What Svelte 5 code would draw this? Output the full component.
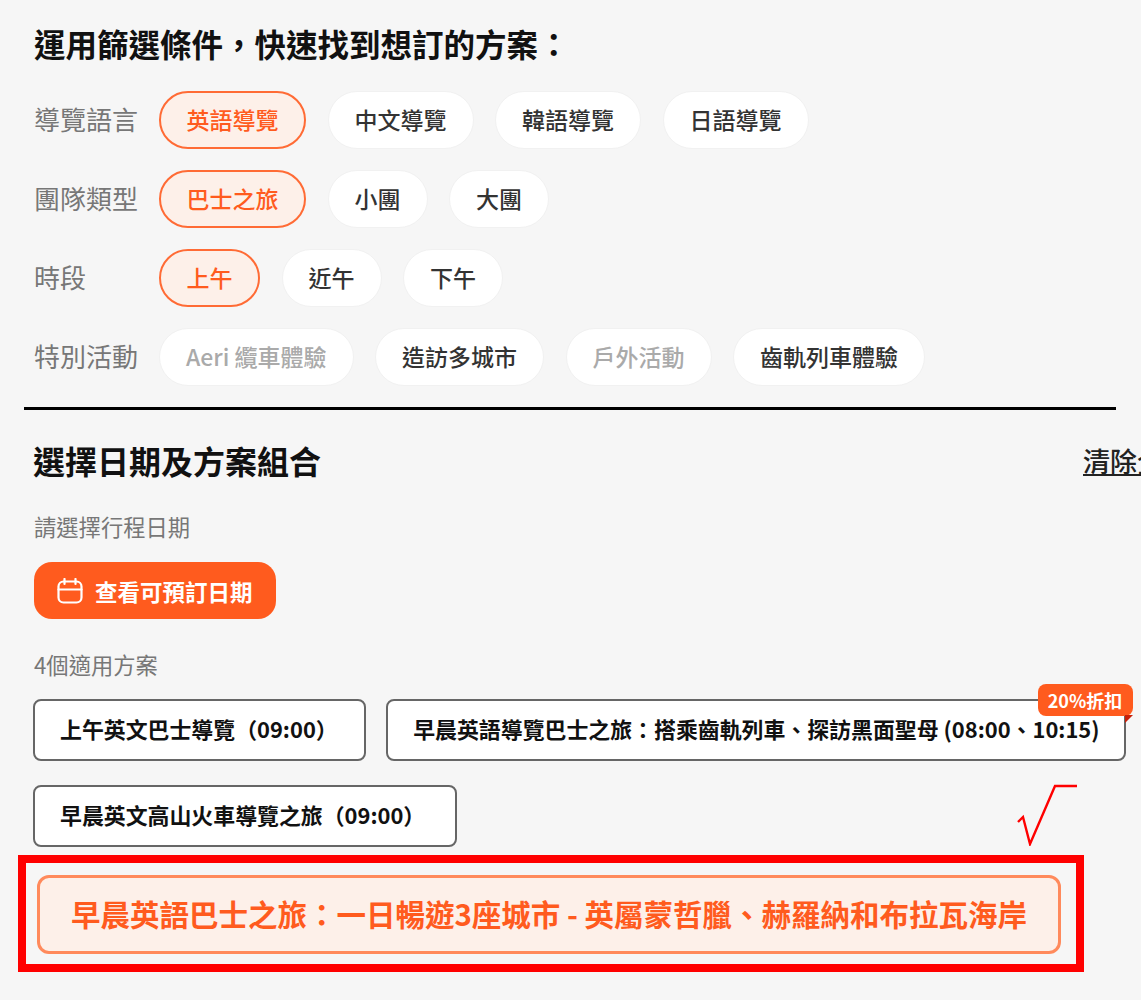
<script>
	const filters = [
		{
			label: '導覽語言',
			chips: [
				{ text: '英語導覽', active: true },
				{ text: '中文導覽' },
				{ text: '韓語導覽' },
				{ text: '日語導覽' }
			]
		},
		{
			label: '團隊類型',
			chips: [{ text: '巴士之旅', active: true }, { text: '小團' }, { text: '大團' }]
		},
		{
			label: '時段',
			chips: [{ text: '上午', active: true }, { text: '近午' }, { text: '下午' }]
		},
		{
			label: '特別活動',
			chips: [
				{ text: 'Aeri 纜車體驗', disabled: true },
				{ text: '造訪多城市' },
				{ text: '戶外活動', disabled: true },
				{ text: '齒軌列車體驗' }
			]
		}
	];
</script>

<div class="page">
	<h2 class="title">運用篩選條件&#xFF0C;快速找到想訂的方案&#xFF1A;</h2>

	<div class="filters">
		{#each filters as row}
			<div class="row">
				<span class="label">{row.label}</span>
				{#each row.chips as chip}
					<button class="chip" class:active={chip.active} class:disabled={chip.disabled}>{chip.text}</button>
				{/each}
			</div>
		{/each}
	</div>

	<hr class="divider" />

	<div class="head">
		<h2 class="title sub">選擇日期及方案組合</h2>
		<span class="clear">清除全部</span>
	</div>

	<p class="hint first">請選擇行程日期</p>
	<button class="date">
		<svg width="26" height="26" viewBox="0 0 26 26" fill="none" stroke="#fff" stroke-width="2.2" stroke-linecap="round">
			<rect x="1.5" y="3.5" width="23" height="21" rx="5" />
			<path d="M1.5 11.5h23M7.5 1v5M18.5 1v5" />
		</svg>
		查看可預訂日期
	</button>

	<p class="hint">4個適用方案</p>
	<div class="plans">
		<button class="plan morning">上午英文巴士導覽&#xFF08;09:00&#xFF09;</button>
		<button class="plan deal">
			早晨英語導覽巴士之旅&#xFF1A;搭乘齒軌列車、探訪黑面聖母 (08:00、10:15)
			<span class="badge">20%折扣</span>
		</button>
		<button class="plan train">早晨英文高山火車導覽之旅&#xFF08;09:00&#xFF09;</button>
	</div>

	<div class="picked">
		<button class="selected">早晨英語巴士之旅&#xFF1A;一日暢遊3座城市 - 英屬蒙哲臘、赫羅納和布拉瓦海岸</button>
	</div>

	<svg class="check" width="62" height="62" viewBox="0 0 62 62" fill="none" stroke="#f00" stroke-width="2.4">
		<path d="M1 38l5-5 7 27L38 2h22" />
	</svg>
</div>

<style>
	:global(body) {
		background: #f6f6f6;
	}

	.page {
		position: relative;
		box-sizing: border-box;
		width: 1141px;
		height: 1000px;
		padding: 23px 0 0 24px;
		overflow: hidden;
		background: #f6f6f6;
		color: #1a1a1a;
		font-family: "Noto Sans CJK TC", "Liberation Sans", sans-serif;
	}

	.title {
		margin: 0 0 28px 10px;
		font-size: 31.5px;
		line-height: 40px;
		font-weight: 700;
		color: #111;
		white-space: nowrap;
	}

	.filters {
		display: flex;
		flex-direction: column;
		gap: 21px;
		margin-left: 10px;
	}

	.row {
		display: flex;
		align-items: center;
		gap: 21.5px;
	}

	.label {
		width: 103.5px;
		padding-bottom: 4px;
		font-size: 26px;
		color: #777;
		white-space: nowrap;
	}

	.chip {
		box-sizing: border-box;
		height: 58px;
		padding: 0 26px 3px;
		border: 1px solid #f1f1f1;
		border-radius: 29px;
		background: #fff;
		color: #333;
		font-family: inherit;
		font-size: 23px;
		font-weight: 500;
		white-space: nowrap;
	}

	.chip.active {
		padding: 0 25.5px 3px;
		border: 2px solid #ff6b35;
		background: #fdf0e9;
		color: #ff5b1e;
	}

	.chip.disabled {
		color: #aaa;
	}

	.divider {
		width: 1092px;
		height: 3px;
		margin: 21px 0 0;
		border: 0;
		background: #000;
	}

	.head {
		display: flex;
		align-items: center;
		gap: 762px;
		margin: 30px 0 0 9px;
		width: max-content;
	}

	.sub {
		margin: 0;
		font-size: 32px;
	}

	.clear {
		font-size: 27px;
		font-weight: 500;
		color: #222;
		text-decoration: underline;
		white-space: nowrap;
	}

	.hint {
		margin: 30px 0 20px 10px;
		font-size: 22.3px;
		line-height: 30px;
		color: #777;
	}

	.hint.first {
		margin: 31px 0 21px 10px;
	}

	.date {
		display: flex;
		align-items: center;
		gap: 12px;
		box-sizing: border-box;
		width: 242px;
		height: 57px;
		margin-left: 10px;
		padding: 0 0 0 23px;
		border: 0;
		border-radius: 18px;
		background: #ff5b1e;
		color: #fff;
		font-family: inherit;
		font-size: 22.5px;
		font-weight: 700;
		white-space: nowrap;
	}

	.plans {
		display: flex;
		flex-wrap: wrap;
		gap: 24px 20px;
		width: 1100px;
		margin-left: 9px;
	}

	.plan {
		position: relative;
		box-sizing: border-box;
		height: 62px;
		padding: 0 25px 3px;
		border: 2px solid #666;
		border-radius: 8px;
		background: #fff;
		color: #111;
		font-family: inherit;
		font-size: 21.9px;
		font-weight: 700;
		white-space: nowrap;
	}

	.plan.morning {
		padding-right: 26.5px;
	}

	.plan.deal {
		padding-right: 24px;
	}

	.plan.train {
		padding-right: 29.5px;
	}

	.badge {
		position: absolute;
		top: -17px;
		right: -9px;
		width: 95px;
		height: 32px;
		border-radius: 8px;
		background: #ff5b1e;
		color: #fff;
		font-size: 18px;
		line-height: 32px;
		font-weight: 700;
		text-align: center;
	}

	.badge::after {
		content: "";
		position: absolute;
		right: 0;
		top: 31px;
		border-style: solid;
		border-width: 8px 8px 0 0;
		border-color: #c8200a transparent transparent transparent;
	}

	.picked {
		box-sizing: border-box;
		width: 1066px;
		margin: 8px 0 0 -6px;
		padding: 12px 15px 10px 11px;
		border: 8px solid #f00;
	}

	.selected {
		display: block;
		box-sizing: border-box;
		width: 100%;
		height: 79px;
		padding: 0 0 3px;
		border: 3px solid #ff8a5c;
		border-radius: 12px;
		background: #fdf0e9;
		color: #ff5b1e;
		font-family: inherit;
		font-size: 29.5px;
		font-weight: 700;
		white-space: nowrap;
	}

	.check {
		position: absolute;
		left: 1017px;
		top: 784px;
	}
</style>
